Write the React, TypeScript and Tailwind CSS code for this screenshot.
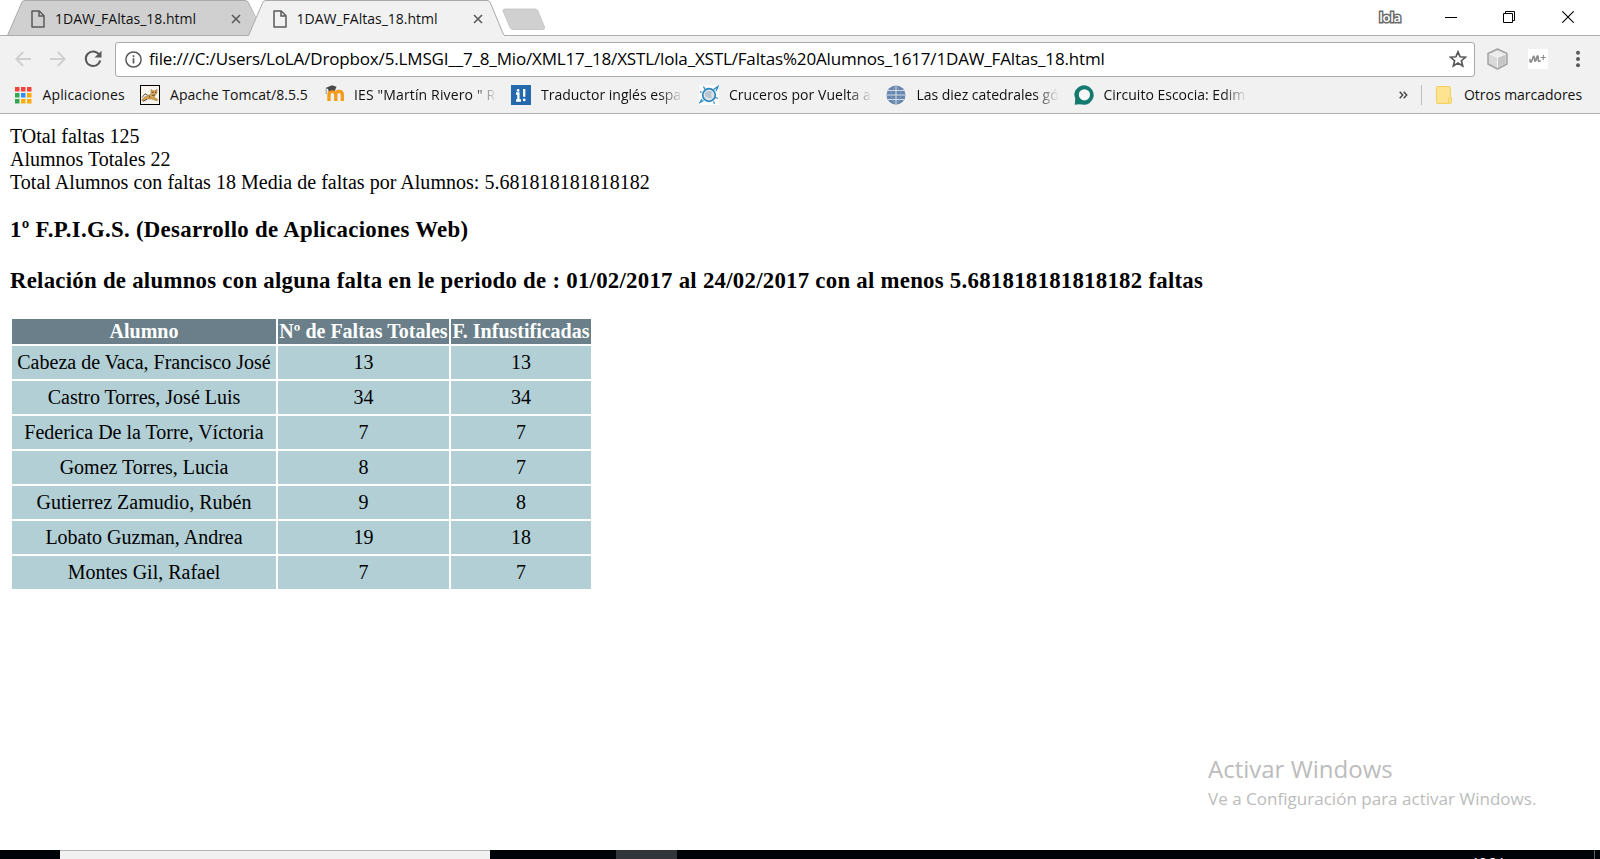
import type { ReactNode } from "react";

const rows: [string, number, number][] = [
  ["Cabeza de Vaca, Francisco José", 13, 13],
  ["Castro Torres, José Luis", 34, 34],
  ["Federica De la Torre, Víctoria", 7, 7],
  ["Gomez Torres, Lucia", 8, 7],
  ["Gutierrez Zamudio, Rubén", 9, 8],
  ["Lobato Guzman, Andrea", 19, 18],
  ["Montes Gil, Rafael", 7, 7],
];

function PageIcon() {
  return (
    <svg className="block shrink-0" width="14" height="18" viewBox="0 0 14 18" fill="none" stroke="#5a5a5a" strokeWidth="1.5">
      <path d="M1 1H8.2L13 5.8V17H1Z" strokeLinejoin="round" />
      <path d="M8 1V6H13" />
    </svg>
  );
}

function TabClose() {
  return (
    <svg className="block shrink-0" width="10" height="10" viewBox="0 0 10 10" stroke="#5a5a5a" strokeWidth="1.6">
      <path d="M1 1L9 9M9 1L1 9" />
    </svg>
  );
}

function TabContent() {
  return (
    <>
      <PageIcon />
      <span className="ml-[10px] w-[142px] whitespace-nowrap text-[14px] leading-5 text-[#111]">1DAW_FAltas_18.html</span>
      <span className="ml-[34px]">
        <TabClose />
      </span>
    </>
  );
}

function TabStrip() {
  return (
    <div className="flex h-9 bg-white shadow-[inset_0_-1px_0_#b0b0b0]">
      <div className="relative ml-[7px] h-9 w-[241px]">
        <svg className="absolute left-0 top-0" width="252" height="36" viewBox="0 0 252 36">
          <path d="M0.5 35.5L15 2Q16 0.5 18 0.5H238Q240 0.5 241 2L252 27V35.5Z" fill="#d0d0d0" />
          <path d="M0.5 35.5L15 2Q16 0.5 18 0.5H238Q240 0.5 241 2L251 22" fill="none" stroke="#a9a9a9" />
          <path d="M0 35.5H242" stroke="#a9a9a9" />
        </svg>
        <div className="relative flex h-[37px] items-center pl-6">
          <TabContent />
        </div>
      </div>
      <div className="relative h-9 w-[258px]">
        <svg className="absolute left-0 top-0" width="258" height="36" viewBox="0 0 258 36">
          <path d="M0.5 36L15 2Q16 0.5 18 0.5H239Q241 0.5 242 2L256.5 36Z" fill="#f1f1f1" />
          <path d="M0.5 35.5L15 2Q16 0.5 18 0.5H239Q241 0.5 242 2L255.5 34.5Q256 35.5 258 35.5" fill="none" stroke="#a9a9a9" />
        </svg>
        <div className="relative flex h-[37px] items-center pl-[24.5px]">
          <TabContent />
        </div>
      </div>
      <svg className="-ml-1 mt-2 block" width="44" height="23" viewBox="0 0 44 23">
        <path d="M3 1H33Q35 1 36 3L42.5 19Q43 21.5 41 21.5H11Q9 21.5 8 19.5L1 3Q0.5 1 3 1Z" fill="#d0d0d0" stroke="#c2c2c2" strokeWidth="0.8" />
      </svg>
      <div className="ml-auto flex h-[33px] items-center">
        <span className="w-6 text-center text-[13px] font-semibold leading-4 tracking-[-0.3px] text-white [-webkit-text-stroke:3px_#6b6b6b] [paint-order:stroke_fill]">lola</span>
        <svg className="ml-[43px] block" width="12" height="12" viewBox="0 0 12 12">
          <path d="M0 6.5H12" stroke="#000" />
        </svg>
        <svg className="ml-[46px] block" width="12" height="12" viewBox="0 0 12 12" fill="none" stroke="#000">
          <path d="M0.5 2.5H9.5V11.5H0.5ZM2.5 2.5V0.5H11.5V9.5H9.5" />
        </svg>
        <svg className="ml-[47px] mr-[26px] block" width="12" height="12" viewBox="0 0 12 12" stroke="#000" strokeWidth="1.1">
          <path d="M0.3 0.3L11.7 11.7M11.7 0.3L0.3 11.7" />
        </svg>
      </div>
    </div>
  );
}

function Toolbar() {
  return (
    <div className="flex h-[45px] items-center pt-px">
      <svg className="ml-[15px] block" width="16" height="16" viewBox="0 0 16 16" fill="none" stroke="#d0d0d0" strokeWidth="1.8">
        <path d="M16 8H1.5M8.2 1L1.3 8L8.2 15" />
      </svg>
      <svg className="ml-[19px] block" width="16" height="16" viewBox="0 0 16 16" fill="none" stroke="#d0d0d0" strokeWidth="1.8">
        <path d="M0 8H14.5M7.8 1L14.7 8L7.8 15" />
      </svg>
      <svg className="ml-[18px] block" width="18" height="18" viewBox="0 0 18 18">
        <path d="M15 4.4A7.3 7.3 0 1 0 16.2 10.5" fill="none" stroke="#5a5a5a" strokeWidth="2" />
        <path d="M17.5 0.8V7.5H10.5Z" fill="#5a5a5a" />
      </svg>
      <div className="ml-[13px] flex h-[35px] w-[1360px] items-center rounded-[3px] border border-[#a9a9a9] bg-white">
        <svg className="ml-[9px] block" width="17" height="17" viewBox="0 0 17 17">
          <circle cx="8.5" cy="8.5" r="7.6" fill="none" stroke="#5a5a5a" strokeWidth="1.5" />
          <path d="M8.5 7.3V12.6M8.5 4.2V6" stroke="#5a5a5a" strokeWidth="1.7" />
        </svg>
        <span className="ml-[7px] whitespace-nowrap text-[17px] leading-6 tracking-[-0.157px] text-black">
          file:///C:/Users/LoLA/Dropbox/5.LMSGI__7_8_Mio/XML17_18/XSTL/lola_XSTL/Faltas%20Alumnos_1617/1DAW_FAltas_18.html
        </span>
        <svg className="ml-auto mr-[7px] block" width="18" height="18" viewBox="0 0 18 18">
          <path d="M9 1.8L11.1 6.8L16.5 7.2L12.4 10.7L13.7 16L9 13.1L4.3 16L5.6 10.7L1.5 7.2L6.9 6.8Z" fill="none" stroke="#5a5a5a" strokeWidth="1.7" />
        </svg>
      </div>
      <svg className="ml-[12px] block" width="21" height="22" viewBox="0 0 21 22">
        <path d="M10.5 1L20 5.5V16L10.5 21L1 16V5.5Z" fill="#d9d9d9" stroke="#a3a3a3" strokeWidth="1.5" strokeLinejoin="round" />
        <path d="M10.5 2.5L18.3 6L10.5 9.5L2.7 6Z" fill="#ececec" />
        <path d="M10.5 9.5L18.3 6V15.3L10.5 19.5Z" fill="#c6c6c6" />
        <path d="M2.5 6L10.5 9.5L18.5 6M10.5 9.5V19.5" fill="none" stroke="#f6f6f6" />
      </svg>
      <div className="ml-[20px] size-5 bg-white">
        <svg className="block" width="20" height="20" viewBox="0 0 20 20" fill="none" stroke="#8c8c8c" strokeLinecap="round" strokeLinejoin="round">
          <path d="M2 10.5Q1.8 13.4 3.2 13Q4.6 11 5 8.2Q5.6 6.4 6.4 8.2L6.8 11.6Q7.3 12.8 8 11.4L9 7.6Q9.8 6 10.2 8L10.3 11.6Q10.8 13 12.2 11.8" strokeWidth="1.6" />
          <path d="M13 8.5H17.5M15.3 6.3V10.7" strokeWidth="1.1" />
        </svg>
      </div>
      <svg className="ml-[27px] block" width="6" height="18" viewBox="0 0 6 18" fill="#5a5a5a">
        <circle cx="3" cy="2.8" r="2" />
        <circle cx="3" cy="9" r="2" />
        <circle cx="3" cy="15.2" r="2" />
      </svg>
    </div>
  );
}

const appColors = [
  "fill-[#f4433c]", "fill-[#f4433c]", "fill-[#f4433c]",
  "fill-[#34a853]", "fill-[#2a90f5]", "fill-[#fbad05]",
  "fill-[#34a853]", "fill-[#fbad05]", "fill-[#fbad05]",
];

function AppsIcon() {
  return (
    <svg className="block" width="17" height="17" viewBox="0 0 17 17">
      {appColors.map((c, i) => (
        <rect key={i} className={c} x={(i % 3) * 6} y={Math.floor(i / 3) * 6} width="4.5" height="4.5" />
      ))}
    </svg>
  );
}

function TomcatIcon() {
  return (
    <svg className="block" width="20" height="20" viewBox="0 0 20 20">
      <rect x="0.5" y="0.5" width="19" height="19" fill="#f7f5ee" stroke="#000" />
      <path d="M2 14.5Q4 12 6.5 11L11 9.5L11 4.5L12.8 5.8H15L17 4.2L17 8L15.3 10L14 12L17.8 14.6L17 15.8L11.5 14L7 14L3.5 16L2 15.8Z" fill="#d9a251" stroke="#8a6534" strokeWidth="0.5" />
      <path d="M2 12.5L5 8.8L7.5 10M3 16.2L7 14.5M9 10.5L10 13M12 10.5L15 10" stroke="#5f5947" fill="none" />
      <path d="M12.2 7.3H13.3M15 7.3H16" stroke="#332" />
    </svg>
  );
}

function MoodleIcon() {
  return (
    <svg className="block" width="20" height="17" viewBox="0 0 20 17">
      <path d="M4 16V9.5Q4 6.3 7.2 6.3T10.8 9.5V16M10.8 9.5Q10.8 6.3 14 6.3T17.3 9.5V16" fill="none" stroke="#f49b1c" strokeWidth="3.3" />
      <path d="M0.5 3L7 0.3L11.5 1.8L9.8 5.8Q6.5 4.5 3.8 6.5L3 4Z" fill="#494949" />
      <path d="M1.2 3.3V9" stroke="#8a8a8a" strokeWidth="0.9" />
    </svg>
  );
}

function TranslatorIcon() {
  return (
    <svg className="block" width="20" height="20" viewBox="0 0 20 20">
      <rect width="20" height="20" fill="#2468ad" />
      <path d="M5 8.5H7.4V15.5M5 15.5H10M13.2 4V11.7" stroke="#fff" strokeWidth="2.3" fill="none" />
      <circle cx="7.1" cy="5.4" r="1.4" fill="#fff" />
      <circle cx="13.2" cy="14.9" r="1.4" fill="#fff" />
    </svg>
  );
}

function CruiseIcon() {
  return (
    <svg className="block" width="20" height="20" viewBox="0 0 20 20">
      <rect width="20" height="20" fill="#fbfbfb" />
      <circle cx="10" cy="10" r="6.3" fill="#dbe2e8" stroke="#2d88bd" strokeWidth="1.7" />
      <path d="M6 8Q9 4.5 13 7Q11 10 13.5 12.5Q9 14 6.5 11Z" fill="#b7c5cf" />
      <path d="M4.5 1.5L6 4.5M14.5 4.5L19 1.5L17 6M16.5 12.5L18.8 13.5M14.5 16.5L15.5 18.8M4.5 15.5L1 17.5L2.8 14M2.5 7.5L1 6.5" stroke="#2486bd" strokeWidth="1.2" fill="none" />
    </svg>
  );
}

function GlobeIcon() {
  return (
    <svg className="block" width="20" height="20" viewBox="0 0 20 20">
      <circle cx="10" cy="10" r="9.5" fill="#6685ad" />
      <path d="M0.5 10H19.5M2 5.5H18M2 14.5H18M10 0.5V19.5" stroke="#d6dfea" strokeWidth="1.1" />
      <path d="M10 0.5C4 6 4 14 10 19.5M10 0.5C16 6 16 14 10 19.5" stroke="#93aac6" strokeWidth="0.6" fill="none" />
    </svg>
  );
}

function CommentIcon() {
  return (
    <svg className="block" width="20" height="20" viewBox="0 0 20 20">
      <path d="M0.8 19.7L1.2 13Q0 10.5 0.5 8A9.7 9.7 0 1 1 8 19.5Q5 18.7 0.8 19.7Z" fill="#14796f" />
      <circle cx="10.4" cy="9.8" r="5.6" fill="#f6f8f7" />
    </svg>
  );
}

type BookmarkProps = { icon: ReactNode; label: string; iconBox: string; text: string; fade?: boolean };

function Bookmark({ icon, label, iconBox, text, fade }: BookmarkProps) {
  return (
    <div className="flex h-[30px] items-center">
      <div className={iconBox}>{icon}</div>
      <div
        className={
          fade
            ? `${text} overflow-hidden whitespace-nowrap [mask-image:linear-gradient(to_right,black_calc(100%-24px),transparent)]`
            : `${text} whitespace-nowrap`
        }
      >
        {label}
      </div>
    </div>
  );
}

function BookmarksBar() {
  return (
    <div className="-mt-px flex h-[34px] items-start border-b border-[#b0b0b0] text-[14px] leading-5 text-[#111]">
      <Bookmark icon={<AppsIcon />} label="Aplicaciones" iconBox="ml-[15px] w-[27.5px]" text="w-[97.5px] tracking-[0.12px]" />
      <Bookmark icon={<TomcatIcon />} label="Apache Tomcat/8.5.5" iconBox="w-[30px]" text="w-[155px] tracking-[0.04px]" />
      <Bookmark icon={<MoodleIcon />} label={'IES "Martín Rivero " R'} iconBox="w-[29px] -mt-1" text="w-[143px] tracking-[0.14px]" fade />
      <Bookmark icon={<TranslatorIcon />} label="Traductor inglés espa" iconBox="ml-[14px] w-[30px]" text="w-[142px]" fade />
      <Bookmark icon={<CruiseIcon />} label="Cruceros por Vuelta a" iconBox="ml-[16px] w-[30px]" text="w-[143px] tracking-[0.04px]" fade />
      <Bookmark icon={<GlobeIcon />} label="Las diez catedrales gó" iconBox="ml-[14px] w-[30.5px]" text="w-[142.5px] tracking-[-0.03px]" fade />
      <Bookmark icon={<CommentIcon />} label="Circuito Escocia: Edim" iconBox="ml-[14.5px] w-[30px]" text="w-[143px]" fade />
      <div className="ml-auto flex h-[30px] items-center">
        <svg className="mr-[13px] block" width="9" height="8" viewBox="0 0 9 8" fill="none" stroke="#4a4a4a" strokeWidth="1.5">
          <path d="M0.7 0.7L3.7 4L0.7 7.3M4.7 0.7L7.7 4L4.7 7.3" />
        </svg>
        <div className="mr-[14px] h-5 w-px bg-[#bdbdbd]" />
        <svg className="block" width="16" height="18" viewBox="0 0 16 18">
          <path d="M1.5 0.5H13Q14.5 0.5 14.5 2V11.5H15.5V16Q15.5 17.5 14 17.5H1.5Q0.5 17.5 0.5 16.5V1.5Q0.5 0.5 1.5 0.5Z" fill="#fee391" stroke="#f3cf63" />
          <path d="M12.5 17V12.5Q12.5 11.5 14.5 11.5" fill="none" stroke="#f3cf63" />
        </svg>
        <span className="ml-[12px] mr-[18px] w-[118px] whitespace-nowrap tracking-[-0.03px]">Otros marcadores</span>
      </div>
    </div>
  );
}

function Report() {
  return (
    <main className="flex-1 px-[10px] pt-[11px] font-['Liberation_Serif',serif] text-[20px] leading-[23px] text-black">
      <p>TOtal faltas 125</p>
      <p>Alumnos Totales 22</p>
      <p className="tracking-[0.026px]">Total Alumnos con faltas 18 Media de faltas por Alumnos: 5.681818181818182</p>
      <h3 className="mt-[22px] text-[22.8px] font-bold leading-[27px] tracking-[0.3px]">1º F.P.I.G.S. (Desarrollo de Aplicaciones Web)</h3>
      <h3 className="mt-6 text-[22.8px] font-bold leading-[27px] tracking-[0.264px]">
        Relación de alumnos con alguna falta en le periodo de : 01/02/2017 al 24/02/2017 con al menos 5.681818181818182 faltas
      </h3>
      <table className="mt-[23px] w-[583px] table-fixed border-separate border-spacing-[2px] text-center">
        <colgroup>
          <col className="w-[264px]" />
          <col className="w-[171px]" />
          <col className="w-[140px]" />
        </colgroup>
        <thead>
          <tr className="h-[25px] whitespace-nowrap bg-[#6a7f89] text-white">
            <th className="p-px">Alumno</th>
            <th className="p-px">Nº de Faltas Totales</th>
            <th className="p-px">F. Infustificadas</th>
          </tr>
        </thead>
        <tbody>
          {rows.map(([name, total, unjustified]) => (
            <tr key={name} className="whitespace-nowrap bg-[#b2cfd5]">
              <td className="p-[5px]">{name}</td>
              <td className="p-[5px]">{total}</td>
              <td className="p-[5px]">{unjustified}</td>
            </tr>
          ))}
        </tbody>
      </table>
    </main>
  );
}

function Taskbar() {
  return (
    <footer className="flex h-[9px] overflow-hidden bg-[#000308]">
      <div className="ml-[60px] w-[430px] border-t border-[#b5b5b5] bg-[#f1f1f1]" />
      <div className="ml-[126px] w-[61px] bg-[#32363a]" />
      <span className="ml-auto mt-[3px] h-5 w-[34px] whitespace-nowrap text-[12.5px] leading-5 text-white">18:34</span>
      <div className="ml-[88px] mr-[5px] w-px bg-[#5c5f63]" />
    </footer>
  );
}

export default function App() {
  return (
    <div className="relative flex h-[859px] w-[1600px] flex-col overflow-hidden bg-white font-['Open_Sans',sans-serif]">
      <header className="bg-[#f1f1f1]">
        <TabStrip />
        <Toolbar />
        <BookmarksBar />
      </header>
      <Report />
      <Taskbar />
      <aside className="absolute left-[1208px] top-[753px] whitespace-nowrap text-[#bcbcbc]">
        <p className="text-[24px] leading-8">Activar Windows</p>
        <p className="text-[17px] leading-[27px] tracking-[0.02px]">Ve a Configuración para activar Windows.</p>
      </aside>
    </div>
  );
}
